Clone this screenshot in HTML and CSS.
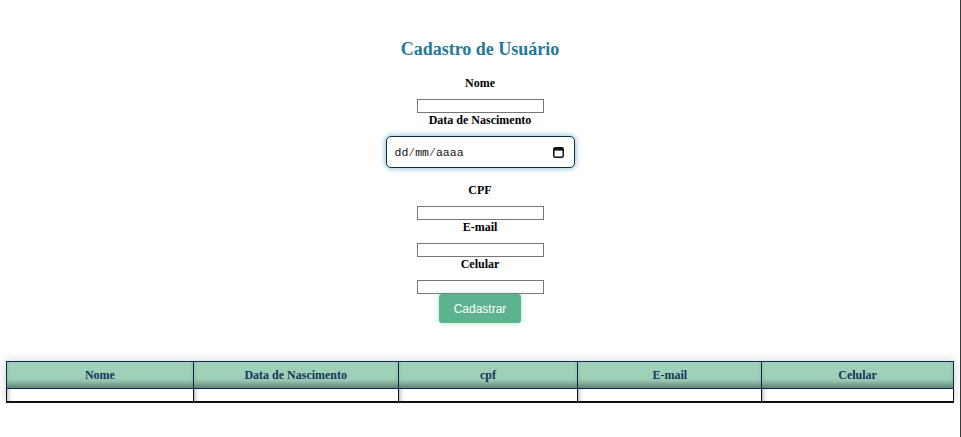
FILE: index.html
```html
<!DOCTYPE html>
<html lang="pt-BR">
<head>
<meta charset="utf-8">
<title>Cadastro de Usuário</title>
<link rel="stylesheet" href="styles.css">
</head>
<body>
<form class="form">
  <h2 class="title">Cadastro de Usuário</h2>
  <label class="lbl" for="nome">Nome</label>
  <input class="txt" id="nome" type="text">
  <label class="lbl" for="nasc">Data de Nascimento</label>
  <div class="date" id="nasc">
    <span class="date-text">dd<span class="sep">/</span>mm<span class="sep">/</span>aaaa</span>
    <svg class="cal" width="11" height="12" viewBox="0 0 11 12"><rect x="0.75" y="1.75" width="9.5" height="9.5" rx="1.5" fill="none" stroke="#111" stroke-width="1.5"/><rect x="1" y="2" width="9" height="2.6" fill="#111"/></svg>
  </div>
  <label class="lbl lbl-after-date" for="cpf">CPF</label>
  <input class="txt" id="cpf" type="text">
  <label class="lbl" for="email">E-mail</label>
  <input class="txt" id="email" type="text">
  <label class="lbl" for="cel">Celular</label>
  <input class="txt" id="cel" type="text">
  <button class="btn" type="button">Cadastrar</button>
</form>
<table class="tbl">
  <thead>
    <tr>
      <th class="c1">Nome</th>
      <th class="c2">Data de Nascimento</th>
      <th class="c3">cpf</th>
      <th class="c4">E-mail</th>
      <th class="c5">Celular</th>
    </tr>
  </thead>
  <tbody>
    <tr><td></td><td></td><td></td><td></td><td></td></tr>
  </tbody>
</table>
</body>
</html>
```
FILE: styles.css
```css
html {
  border-right: 1px solid #3a3a3a;
  min-height: 100%;
  background: #fff;
}
body {
  margin: 0;
  font-family: "Liberation Serif", "Times New Roman", serif;
  color: #000;
}
.form {
  display: flex;
  flex-direction: column;
  align-items: center;
  padding-top: 38px;
}
.title {
  margin: 0 0 16px;
  font-size: 18px;
  line-height: 22px;
  font-weight: bold;
  color: #1f7a99;
}
.lbl {
  display: block;
  font-size: 12px;
  line-height: 14px;
  font-weight: bold;
  margin-bottom: 9px;
}
.lbl-after-date {
  margin-top: 15px;
}
.txt {
  display: block;
  box-sizing: border-box;
  width: 127px;
  height: 14px;
  margin: 0;
  padding: 0 2px;
  border: 1px solid #767676;
  font-size: 10px;
  background: #fff;
}
.date {
  box-sizing: border-box;
  width: 189px;
  height: 32px;
  border: 1px solid #0d2d4e;
  border-radius: 5px;
  box-shadow: 0 0 5px 1px rgba(60, 150, 185, 0.55);
  display: flex;
  align-items: center;
  justify-content: space-between;
  padding: 0 10px 0 8px;
  background: #fff;
}
.date-text {
  font-family: "Liberation Mono", "DejaVu Sans Mono", monospace;
  font-size: 11.5px;
  color: #111;
}
.sep {
  color: #555;
}
.cal {
  display: block;
}
.btn {
  width: 82px;
  height: 29px;
  margin: 0;
  border: none;
  border-radius: 3px;
  background: #5cb38f;
  color: #fff;
  font-family: "Liberation Sans", Arial, sans-serif;
  font-size: 12px;
  box-shadow: 0 0 6px rgba(92, 200, 150, 0.5);
}
.tbl {
  margin: 38px 6px 0;
  width: 948px;
  border-collapse: collapse;
  box-shadow: 0 0 10px rgba(0, 0, 0, 0.18);
}
.tbl th {
  height: 26px;
  padding: 0;
  background: #9fd1b9;
  color: #15345c;
  font-size: 12px;
  font-weight: bold;
  border: 1px solid #0e2b57;
  box-shadow: inset 0 -7px 6px -3px rgba(0, 0, 0, 0.4);
}
.tbl td {
  height: 12px;
  padding: 0;
  background: #fff;
  border: 1px solid #111;
  border-bottom-width: 2px;
  box-shadow: inset 4px 0 4px -3px rgba(0, 0, 0, 0.35);
}
.c1 { width: 187px; }
.c2 { width: 205px; }
.c3 { width: 180px; }
.c4 { width: 184px; }
.c5 { width: 192px; }
```
